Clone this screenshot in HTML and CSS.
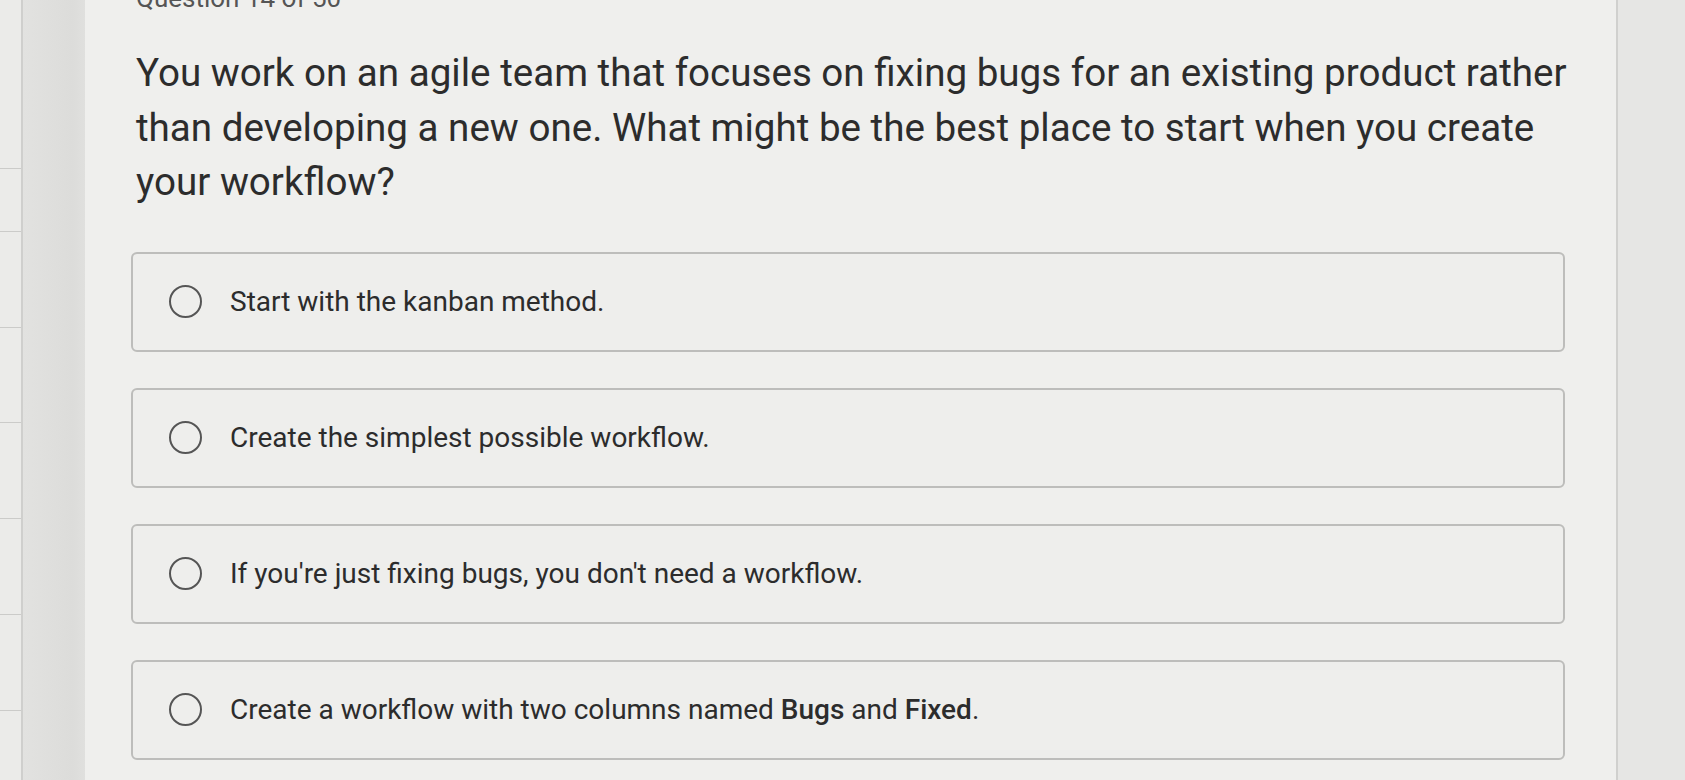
FILE: index.html
```html
<!DOCTYPE html>
<html lang="en">
<head>
<meta charset="utf-8">
<title>Question 14 of 50</title>
<link rel="stylesheet" href="styles.css">
</head>
<body>
<div class="screen">
  <aside class="side">
    <div class="side-edge"></div>
    <div class="side-fill"></div>
  </aside>
  <main class="panel">
    <div class="counter">Question 14 of 50</div>
    <h1 class="question">You work on an agile team that focuses on fixing bugs for an existing product rather than developing a new one. What might be the best place to start when you create your workflow?</h1>
    <div class="options">
      <label class="option"><span class="radio"></span><span class="opt-text">Start with the kanban method.</span></label>
      <label class="option"><span class="radio"></span><span class="opt-text">Create the simplest possible workflow.</span></label>
      <label class="option"><span class="radio"></span><span class="opt-text">If you're just fixing bugs, you don't need a workflow.</span></label>
      <label class="option"><span class="radio"></span><span class="opt-text">Create a workflow with two columns named <b>Bugs</b> and <b>Fixed</b>.</span></label>
    </div>
  </main>
  <div class="right-strip"></div>
</div>
</body>
</html>
```
FILE: styles.css
```css
* { box-sizing: border-box; }
html, body { margin: 0; padding: 0; }
body {
  width: 1685px;
  height: 780px;
  overflow: hidden;
  background: #e9e9e7;
  font-family: Roboto, Inter, "Liberation Sans", sans-serif;
  color: #2f2f2f;
}
.screen {
  display: flex;
  height: 780px;
}
.side {
  width: 85px;
  flex: none;
  display: flex;
}
.side-edge {
  width: 23px;
  flex: none;
  border-right: 2px solid #cfcfcd;
  background-color: #ebebe9;
  background-image:
    linear-gradient(#cbcbc9, #cbcbc9),
    linear-gradient(#cbcbc9, #cbcbc9),
    linear-gradient(#cbcbc9, #cbcbc9),
    linear-gradient(#cbcbc9, #cbcbc9),
    linear-gradient(#cbcbc9, #cbcbc9),
    linear-gradient(#cbcbc9, #cbcbc9),
    linear-gradient(#cbcbc9, #cbcbc9);
  background-repeat: no-repeat;
  background-size: 100% 1px;
  background-position: 0 168px, 0 231px, 0 327px, 0 422px, 0 518px, 0 614px, 0 710px;
}
.side-fill {
  flex: 1;
  background: linear-gradient(90deg, #e2e2e0, #dcdcda 80%, #e0e0de);
}
.panel {
  flex: 1;
  background: #efefed;
  padding: 0 51px 0 46px;
  border-right: 2px solid #d0d0ce;
}
.counter {
  margin: -17px 0 0 5px;
  font-size: 26px;
  line-height: 30px;
  color: #555;
}
.question {
  margin: 33px -40px 0 5px;
  font-size: 38.6px;
  font-weight: 400;
  line-height: 54.5px;
  color: #2c2c2c;
}
.options {
  margin-top: 42px;
  display: flex;
  flex-direction: column;
  gap: 36px;
}
.option {
  display: flex;
  align-items: center;
  height: 100px;
  border: 2px solid #bdbdbb;
  border-radius: 6px;
  background: #eeeeec;
  padding-left: 36px;
}
.radio {
  width: 33px;
  height: 33px;
  flex: none;
  border: 2px solid #555;
  border-radius: 50%;
  margin-right: 28px;
}
.opt-text {
  font-size: 28px;
  color: #2c2c2c;
}
.opt-text b { font-weight: 500; }
.right-strip {
  width: 67px;
  flex: none;
  background: #e6e6e4;
}
```
